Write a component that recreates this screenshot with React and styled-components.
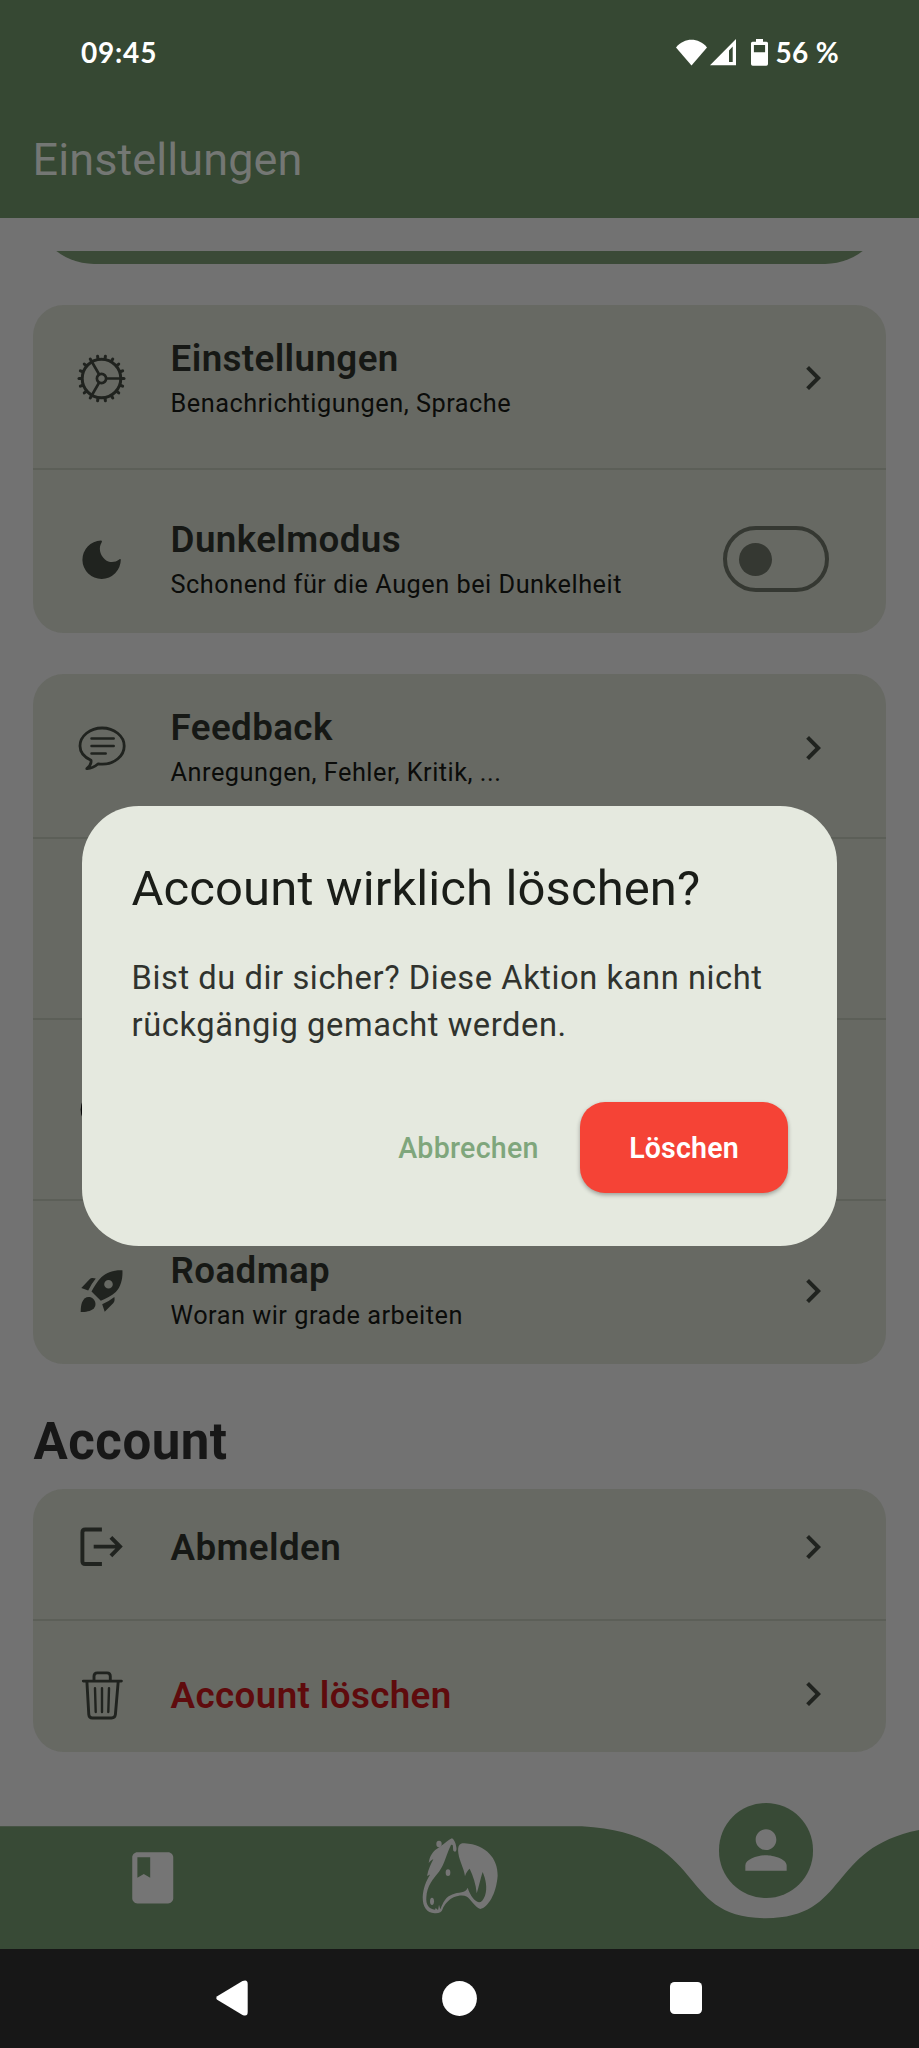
import React from 'react';
import styled, { createGlobalStyle } from 'styled-components';

const color = {
  header: '#364833',
  page: '#727272',
  hero: '#3b4a37',
  card: '#676963',
  divider: '#5c5f58',
  nav: '#384a36',
  system: '#171717',
  icon: '#20231f',
  title: '#161815',
  subtitle: '#0b0c0a',
  danger: '#5f0b0d',
  dialog: '#e5e9df',
};

const GlobalStyle = createGlobalStyle`
  *, *::before, *::after { box-sizing: border-box; }
  body {
    margin: 0;
    background: ${color.page};
    font-family: Roboto, "Liberation Sans", sans-serif;
  }
`;

const Screen = styled.div`
  position: relative;
  display: flex;
  flex-direction: column;
  width: 919px;
  height: 2048px;
  overflow: hidden;
  background: ${color.page};
`;

const Header = styled.header`
  flex: none;
  height: 218px;
  background: ${color.header};
`;

const StatusBar = styled.div`
  display: flex;
  align-items: center;
  justify-content: space-between;
  height: 101px;
  padding: 3px 80px 0 81px;
  color: #fff;
  font: 700 28px/34px Lato, sans-serif;
`;

const Clock = styled.span`
  letter-spacing: 0.8px;
`;

const StatusIcons = styled.div`
  display: flex;
  align-items: center;
  svg { display: block; fill: #fff; }
`;

const WifiIcon = styled.svg`
  margin-right: 3px;
`;

const SignalIcon = styled.svg`
  margin-right: 14.5px;
`;

const BatteryIcon = styled.svg`
  margin-right: 8px;
`;

const Battery = styled.span`
  letter-spacing: 0.3px;
`;

const AppBar = styled.div`
  display: flex;
  align-items: center;
  height: 117px;
  padding-left: 32.5px;
`;

const AppTitle = styled.h1`
  margin: 0;
  color: #747774;
  font-size: 45px;
  font-weight: 400;
  line-height: 56px;
  letter-spacing: 0.1px;
`;

const Content = styled.main`
  flex: 1;
  min-height: 0;
  padding: 33px 33px 0;
`;

const HeroClip = styled.div`
  display: flex;
  align-items: flex-end;
  height: 12.6px;
  margin-bottom: 41.1px;
  overflow: hidden;
`;

const HeroCard = styled.div`
  flex: 1;
  height: 200px;
  border-radius: 61px;
  background: ${color.hero};
`;

const Card = styled.section`
  margin-bottom: 41.4px;
  border-radius: 31px;
  background: ${color.card};
`;

const Divider = styled.div`
  display: flex;
  align-items: center;
  height: ${(p) => (p.$compact ? 33 : 33.8)}px;
  &::before {
    content: '';
    flex: 1;
    height: 2px;
    background: ${color.divider};
  }
`;

const Row = styled.div`
  display: flex;
  align-items: center;
  height: ${(p) => (p.$compact ? 114.7 : 147.2)}px;
  padding: 0 49.5px 0 43.6px;
`;

const RowIcon = styled.svg`
  flex: none;
  width: 49px;
  height: 49px;
  margin-right: 45px;
  overflow: visible;
  fill: ${color.icon};
`;

const RowText = styled.div`
  flex: 1;
  padding-top: ${(p) => (p.$compact ? 3.5 : 2)}px;
`;

const RowTitle = styled.div`
  color: ${(p) => (p.$danger ? color.danger : color.title)};
  font-size: 36.75px;
  font-weight: 600;
  line-height: 48px;
  letter-spacing: 0.38px;
`;

const RowSubtitle = styled.div`
  color: ${color.subtitle};
  font-size: 25.3px;
  line-height: 41px;
  letter-spacing: 0.5px;
`;

const ChevronSvg = styled.svg`
  flex: none;
  width: 48px;
  height: 48px;
  fill: ${color.icon};
`;

const Switch = styled.div`
  display: flex;
  align-items: center;
  width: 106px;
  height: 66px;
  margin-right: 8px;
  padding-left: 12px;
  border: 4px solid #353832;
  border-radius: 33px;
`;

const SwitchThumb = styled.div`
  width: 33px;
  height: 33px;
  border-radius: 50%;
  background: #353832;
`;

const SectionTitle = styled.h2`
  margin: 47.6px 0 17.3px;
  padding-left: 0.5px;
  color: #171717;
  font-size: 51px;
  font-weight: 700;
  line-height: 60px;
  letter-spacing: 0.5px;
`;

const BottomNav = styled.nav`
  position: relative;
  flex: none;
  display: flex;
  height: 123px;
  overflow: visible;
`;

const NavWave = styled.svg`
  position: absolute;
  inset: 0;
  fill: ${color.nav};
`;

const NavItem = styled.div`
  position: relative;
  flex: 1;
  display: flex;
  justify-content: center;
  padding-top: ${(p) => p.$top}px;
  svg { display: block; fill: #757575; }
`;

const ActiveBubble = styled.div`
  position: absolute;
  top: -23px;
  left: 50%;
  display: flex;
  align-items: center;
  justify-content: center;
  width: 94.5px;
  height: 94.5px;
  margin-left: -47.2px;
  border-radius: 50%;
  background: ${color.nav};
`;

const SystemNav = styled.div`
  position: relative;
  flex: none;
  display: flex;
  align-items: center;
  justify-content: space-between;
  height: 99px;
  padding: 0 217px 1px 216px;
  background: ${color.system};
  svg { display: block; fill: #fff; }
`;

const Overlay = styled.div`
  position: absolute;
  inset: 0;
  display: flex;
  justify-content: center;
  align-items: flex-start;
  padding-top: 806.3px;
`;

const Dialog = styled.div`
  width: 755px;
  height: 439.5px;
  padding: 50px 49px 49px 49.5px;
  border-radius: 57px;
  background: ${color.dialog};
`;

const DialogTitle = styled.h2`
  margin: 0 0 33.1px;
  color: #1a1d18;
  font-size: 49px;
  font-weight: 400;
  line-height: 65.3px;
  letter-spacing: 0.1px;
`;

const DialogBody = styled.p`
  margin: 0 0 51.8px;
  color: #30332e;
  font-size: 32.67px;
  line-height: 47.8px;
  letter-spacing: 0.58px;
  white-space: nowrap;
`;

const DialogActions = styled.div`
  display: flex;
  justify-content: flex-end;
  align-items: center;
  gap: 41.3px;
`;

const TextButton = styled.button`
  padding: 2px 0 0;
  border: 0;
  background: none;
  color: #7fa67c;
  font: 500 28.6px/36px Roboto, sans-serif;
  letter-spacing: 0.25px;
`;

const DangerButton = styled.button`
  width: 208px;
  height: 90.7px;
  padding: 2px 0 0;
  border: 0;
  border-radius: 25px;
  background: #f54336;
  box-shadow: 0 2px 4px rgba(0, 0, 0, 0.32);
  color: #fff;
  font: 600 28.6px/36px Roboto, sans-serif;
  letter-spacing: 0.15px;
`;

const teeth = Array.from({ length: 18 }, (_, i) => i * 20);
const spokes = [0, 120, 240];

const Gear = () => (
  <RowIcon viewBox="-24.5 -24.5 49 49">
    <g fill="none" stroke={color.icon} strokeWidth="3" strokeLinecap="round">
      <circle r="19.3" />
      <circle r="4.6" strokeWidth="2.7" />
      {teeth.map((a) => (
        <path key={a} d="M20.4 0H22.5" transform={`rotate(${a})`} />
      ))}
      {spokes.map((a) => (
        <path key={a} d="M5.5 0H18.5" strokeWidth="2.6" transform={`rotate(${a})`} />
      ))}
    </g>
  </RowIcon>
);

const Moon = () => (
  <RowIcon viewBox="0 0 49 49">
    <path d="M24 5.5A19.2 19.2 0 1 0 43.8 24.8C43.8 24 43 23.8 42.3 24.5C38 27.8 32 28 28 24.4C22.5 19.8 21.5 12.5 24.6 7.5C25.2 6.3 25 5.5 24 5.5Z" />
  </RowIcon>
);

const Chat = () => (
  <RowIcon viewBox="0 0 49 49">
    <g fill="none" stroke={color.icon} strokeWidth="2.8" strokeLinejoin="round" strokeLinecap="round">
      <path d="M14 37.2C8 34.5 3 29.5 3 23C3 13 13 5 25.1 5S47.2 13 47.2 23S37.5 41.1 25.5 41.1C24 41.1 22.5 41 21.2 40.8C17.5 44 13.5 45.8 9.8 45.6C12.5 43.5 14.5 40.5 14 37.2Z" />
      <path d="M14.5 15.4H36.7M14.5 23.1H36.7M14.5 30.4H28.7" strokeWidth="2.5" />
    </g>
  </RowIcon>
);

const Disc = () => (
  <RowIcon viewBox="0 0 49 49">
    <circle cx="24.5" cy="24.5" r="20.8" fill="#050505" />
  </RowIcon>
);

const Rocket = () => (
  <RowIcon viewBox="0 0 49 49">
    <path
      fillRule="evenodd"
      d="M45.4 4.2C38 3.8 29.5 5.8 24.3 11.3C19.8 16.2 17 20.8 14.5 25.4L23.8 34.7C29 32.6 34.5 30 38.8 26C44.3 20.5 45.9 11.5 45.4 4.2ZM31.5 13.9A4.3 4.3 0 1 1 31.5 22.5A4.3 4.3 0 0 1 31.5 13.9Z"
    />
    <path d="M4.3 22L12.6 13.2Q13.8 12 15.5 12.1L18.8 12.5Q14.2 18 11.2 24.4Z" />
    <path d="M25.2 38.3Q31.8 35.6 37.4 31.1L37.6 33.6Q37.7 35.6 36.4 37L27.7 45.7Z" />
    <path d="M3.7 46C3.8 40.8 4 36 7.6 32.4C10.6 30.4 14 30.8 16.3 33C19 35.8 19.2 39.6 16.8 42.4C13.4 45.4 8.8 45.8 3.7 46Z" />
  </RowIcon>
);

const Logout = () => (
  <RowIcon viewBox="0 0 49 49">
    <g fill="none" stroke={color.icon} strokeWidth="3.9">
      <path d="M24.9 7.5H8.2Q5.4 7.5 5.4 10.3V39.2Q5.4 42 8.2 42H24.9" />
      <path d="M16.7 24.6H43.5M33.9 15.4L43 24.6L33.9 33.8" />
    </g>
  </RowIcon>
);

const Trash = () => (
  <RowIcon viewBox="0 0 49 49">
    <g fill="none" stroke={color.icon} strokeWidth="2.9" strokeLinecap="round" strokeLinejoin="round">
      <path d="M6.3 11.1H44.4M17 10.6V6.2Q17 2.9 20.3 2.9H30Q33.3 2.9 33.3 6.2V10.6" />
      <path d="M9.9 11.5L11.8 44.6Q12.1 48 15.4 48H34.6Q37.9 48 38.4 44.6L41.2 11.5" />
      <path d="M18 18.3L18.7 42M25 18.3V42M32 18.3L31.3 42" strokeWidth="2.4" />
    </g>
  </RowIcon>
);

const Chevron = () => (
  <ChevronSvg viewBox="0 0 24 24">
    <path d="M10 6L8.59 7.41L13.17 12L8.59 16.59L10 18L16 12Z" />
  </ChevronSvg>
);

const Horse = () => (
  <svg width="80" height="83.3" viewBox="118 100 240 250">
    <path d="M217 113C205 118 190 134 172 144C160 152 150 165 147 187C151 182 156 178 161 176C154 190 146 205 142 226C146 224 149 222 151 222C140 240 130 262 129 290C129 318 140 337 165 338C178 339 186 335 189 325C194 312 206 298 222 290C240 283 252 284 262 288C274 296 284 318 302 325C325 320 350 280 354 225C355 175 320 132 255 128C240 127 233 134 236 158C240 185 252 200 256 227C259 216 265 208 270 204C280 225 289 250 291 278C297 262 302 235 309 214C318 235 324 262 316 285C311 298 305 305 298 305C285 302 272 285 264 261C260 270 254 273 246 275C225 278 208 282 196 298C190 306 186 316 182 326L178 312L175 328L168 322L166 327C148 326 138 312 140 290C142 255 160 235 178 213C195 192 200 160 214 133C222 128 219 142 221 150C228 158 232 150 230 140C228 125 222 116 217 113Z" />
    <ellipse cx="205" cy="216" rx="7" ry="10" />
    <ellipse cx="157" cy="302" rx="6" ry="11" />
    <ellipse cx="178" cy="130" rx="8" ry="10" />
  </svg>
);

const SettingsRow = ({ icon: Icon, title, subtitle, compact, danger, control }) => (
  <Row $compact={compact}>
    {Icon && <Icon />}
    <RowText $compact={compact}>
      {title && <RowTitle $danger={danger}>{title}</RowTitle>}
      {subtitle && <RowSubtitle>{subtitle}</RowSubtitle>}
    </RowText>
    {control || <Chevron />}
  </Row>
);

export default function App() {
  return (
    <>
      <GlobalStyle />
      <Screen>
        <Header>
          <StatusBar>
            <Clock>09:45</Clock>
            <StatusIcons>
              <WifiIcon width="31" height="27" viewBox="0 0 31 27">
                <path d="M15.5 26.5L0 8.4C8.5 -1.8 22.5 -1.8 31 8.4Z" />
              </WifiIcon>
              <SignalIcon width="26" height="27" viewBox="0 0 26 27">
                <path fillRule="evenodd" d="M26 0V26.3H0ZM22.7 7.5L19 11.5V23H22.7Z" />
              </SignalIcon>
              <BatteryIcon width="17" height="27" viewBox="0 0 17 27">
                <path
                  fillRule="evenodd"
                  d="M5 0H12V2.7H15.5Q17 2.7 17 4.2V25Q17 26.7 15.3 26.7H1.7Q0 26.7 0 25V4.2Q0 2.7 1.5 2.7H5ZM2.9 6V13.2H14.1V6Z"
                />
              </BatteryIcon>
              <Battery>56 %</Battery>
            </StatusIcons>
          </StatusBar>
          <AppBar>
            <AppTitle>Einstellungen</AppTitle>
          </AppBar>
        </Header>

        <Content>
          <HeroClip>
            <HeroCard />
          </HeroClip>

          <Card>
            <SettingsRow icon={Gear} title="Einstellungen" subtitle="Benachrichtigungen, Sprache" />
            <Divider />
            <SettingsRow
              icon={Moon}
              title="Dunkelmodus"
              subtitle="Schonend für die Augen bei Dunkelheit"
              control={
                <Switch>
                  <SwitchThumb />
                </Switch>
              }
            />
          </Card>

          <Card>
            <SettingsRow icon={Chat} title="Feedback" subtitle="Anregungen, Fehler, Kritik, ..." />
            <Divider />
            <SettingsRow />
            <Divider />
            <SettingsRow icon={Disc} />
            <Divider />
            <SettingsRow icon={Rocket} title="Roadmap" subtitle="Woran wir grade arbeiten" />
          </Card>

          <SectionTitle>Account</SectionTitle>
          <Card>
            <SettingsRow compact icon={Logout} title="Abmelden" />
            <Divider $compact />
            <SettingsRow compact danger icon={Trash} title="Account löschen" />
          </Card>
        </Content>

        <BottomNav>
          <NavWave width="919" height="123" viewBox="0 0 919 123">
            <path d="M0 0.3H582C710.7 8 673.9 92.2 765.8 92.2C857.8 92.2 821 8 949.6 0.3V123H0Z" />
          </NavWave>
          <NavItem $top={20.5}>
            <svg width="61.5" height="61.5" viewBox="0 0 24 24">
              <path d="M18 2H6c-1.1 0-2 .9-2 2v16c0 1.1.9 2 2 2h12c1.1 0 2-.9 2-2V4c0-1.1-.9-2-2-2zM6 4h5v8l-2.5-1.5L6 12V4z" />
            </svg>
          </NavItem>
          <NavItem $top={8}>
            <Horse />
          </NavItem>
          <NavItem $top={0}>
            <ActiveBubble>
              <svg width="62" height="62" viewBox="0 0 24 24">
                <path d="M12 12c2.21 0 4-1.79 4-4s-1.79-4-4-4-4 1.79-4 4 1.79 4 4 4zm0 2c-2.67 0-8 1.34-8 4v2h16v-2c0-2.66-5.33-4-8-4z" />
              </svg>
            </ActiveBubble>
          </NavItem>
        </BottomNav>

        <SystemNav>
          <svg width="32" height="36" viewBox="0 0 32 36">
            <path d="M1.2 16.2L26.5 1.1Q31.7 -1 31.7 4V32Q31.7 37 26.5 34.9L1.2 19.8Q-0.6 18 1.2 16.2Z" />
          </svg>
          <svg width="35" height="35" viewBox="0 0 35 35">
            <circle cx="17.5" cy="17.5" r="17.4" />
          </svg>
          <svg width="32" height="32" viewBox="0 0 32 32">
            <rect width="32" height="32" rx="4.5" />
          </svg>
        </SystemNav>

        <Overlay>
          <Dialog role="dialog">
            <DialogTitle>Account wirklich löschen?</DialogTitle>
            <DialogBody>
              Bist du dir sicher? Diese Aktion kann nicht
              <br />
              rückgängig gemacht werden.
            </DialogBody>
            <DialogActions>
              <TextButton>Abbrechen</TextButton>
              <DangerButton>Löschen</DangerButton>
            </DialogActions>
          </Dialog>
        </Overlay>
      </Screen>
    </>
  );
}
